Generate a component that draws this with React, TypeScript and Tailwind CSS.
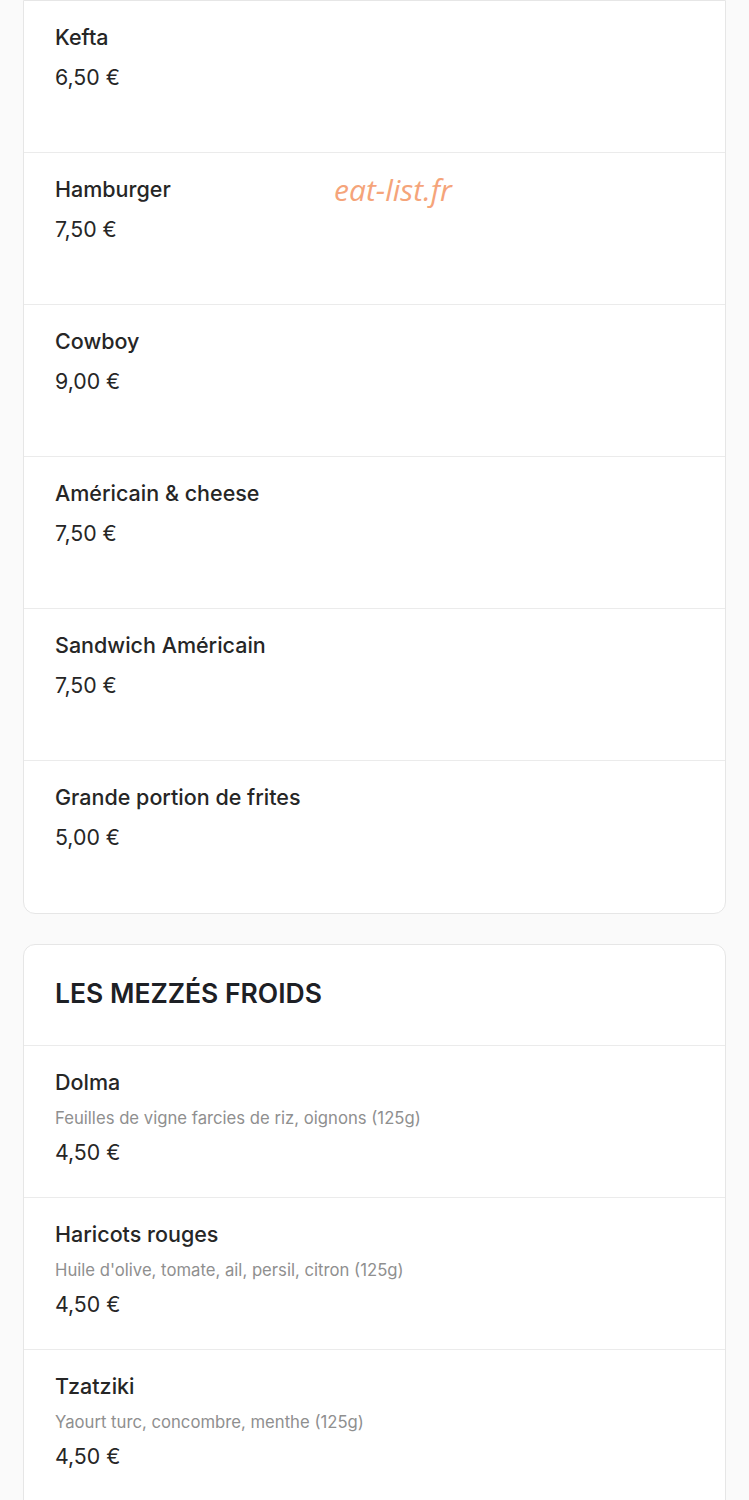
import React from "react";

type Item = { name: string; price: string; desc?: string };

const grillades: Item[] = [
  { name: "Kefta", price: "6,50 €" },
  { name: "Hamburger", price: "7,50 €" },
  { name: "Cowboy", price: "9,00 €" },
  { name: "Américain & cheese", price: "7,50 €" },
  { name: "Sandwich Américain", price: "7,50 €" },
  { name: "Grande portion de frites", price: "5,00 €" },
];

const mezzes: Item[] = [
  { name: "Dolma", desc: "Feuilles de vigne farcies de riz, oignons (125g)", price: "4,50 €" },
  { name: "Haricots rouges", desc: "Huile d'olive, tomate, ail, persil, citron (125g)", price: "4,50 €" },
  { name: "Tzatziki", desc: "Yaourt turc, concombre, menthe (125g)", price: "4,50 €" },
];

function Row({ item, last }: { item: Item; last?: boolean }) {
  return (
    <div
      className={
        "h-[152px] px-[31px] pt-[22px] " + (last ? "" : "border-b border-[#ebebeb]")
      }
    >
      <div className="text-[21.5px] leading-[28px] font-medium text-[#262626]">{item.name}</div>
      {item.desc && (
        <div className="mt-[10px] text-[16.7px] leading-[24px] text-[#8f8f8f]">{item.desc}</div>
      )}
      <div
        className={
          (item.desc ? "mt-[8px]" : "mt-[12px]") +
          " text-[21.3px] leading-[28px] text-[#262626]"
        }
      >
        {item.price}
      </div>
    </div>
  );
}

export default function App() {
  return (
    <div
      className="relative h-[1500px] overflow-hidden bg-[#fafafa] px-[23px]"
      style={{ fontFamily: "Inter, 'Noto Sans', sans-serif" }}
    >
      <div className="bg-white border border-[#e6e6e6] rounded-b-[12px]">
        {grillades.map((it, i) => (
          <Row key={it.name} item={it} last={i === grillades.length - 1} />
        ))}
      </div>

      <div className="mt-[30px] bg-white border border-[#e6e6e6] rounded-[12px] overflow-hidden pb-[60px]">
        <div className="h-[101px] px-[31px] flex items-center border-b border-[#ebebeb]">
          <h2 className="text-[26.5px] font-semibold text-[#1d2025] -mt-[2px]">
            LES MEZZÉS FROIDS
          </h2>
        </div>
        {mezzes.map((it, i) => (
          <Row key={it.name} item={it} last={i === mezzes.length - 1} />
        ))}
      </div>

      <div
        className="absolute left-[334px] top-[167px] text-[30px] italic text-[#f5a47a]"
        style={{ fontFamily: "'Open Sans', sans-serif" }}
      >
        eat-list.fr
      </div>
    </div>
  );
}
